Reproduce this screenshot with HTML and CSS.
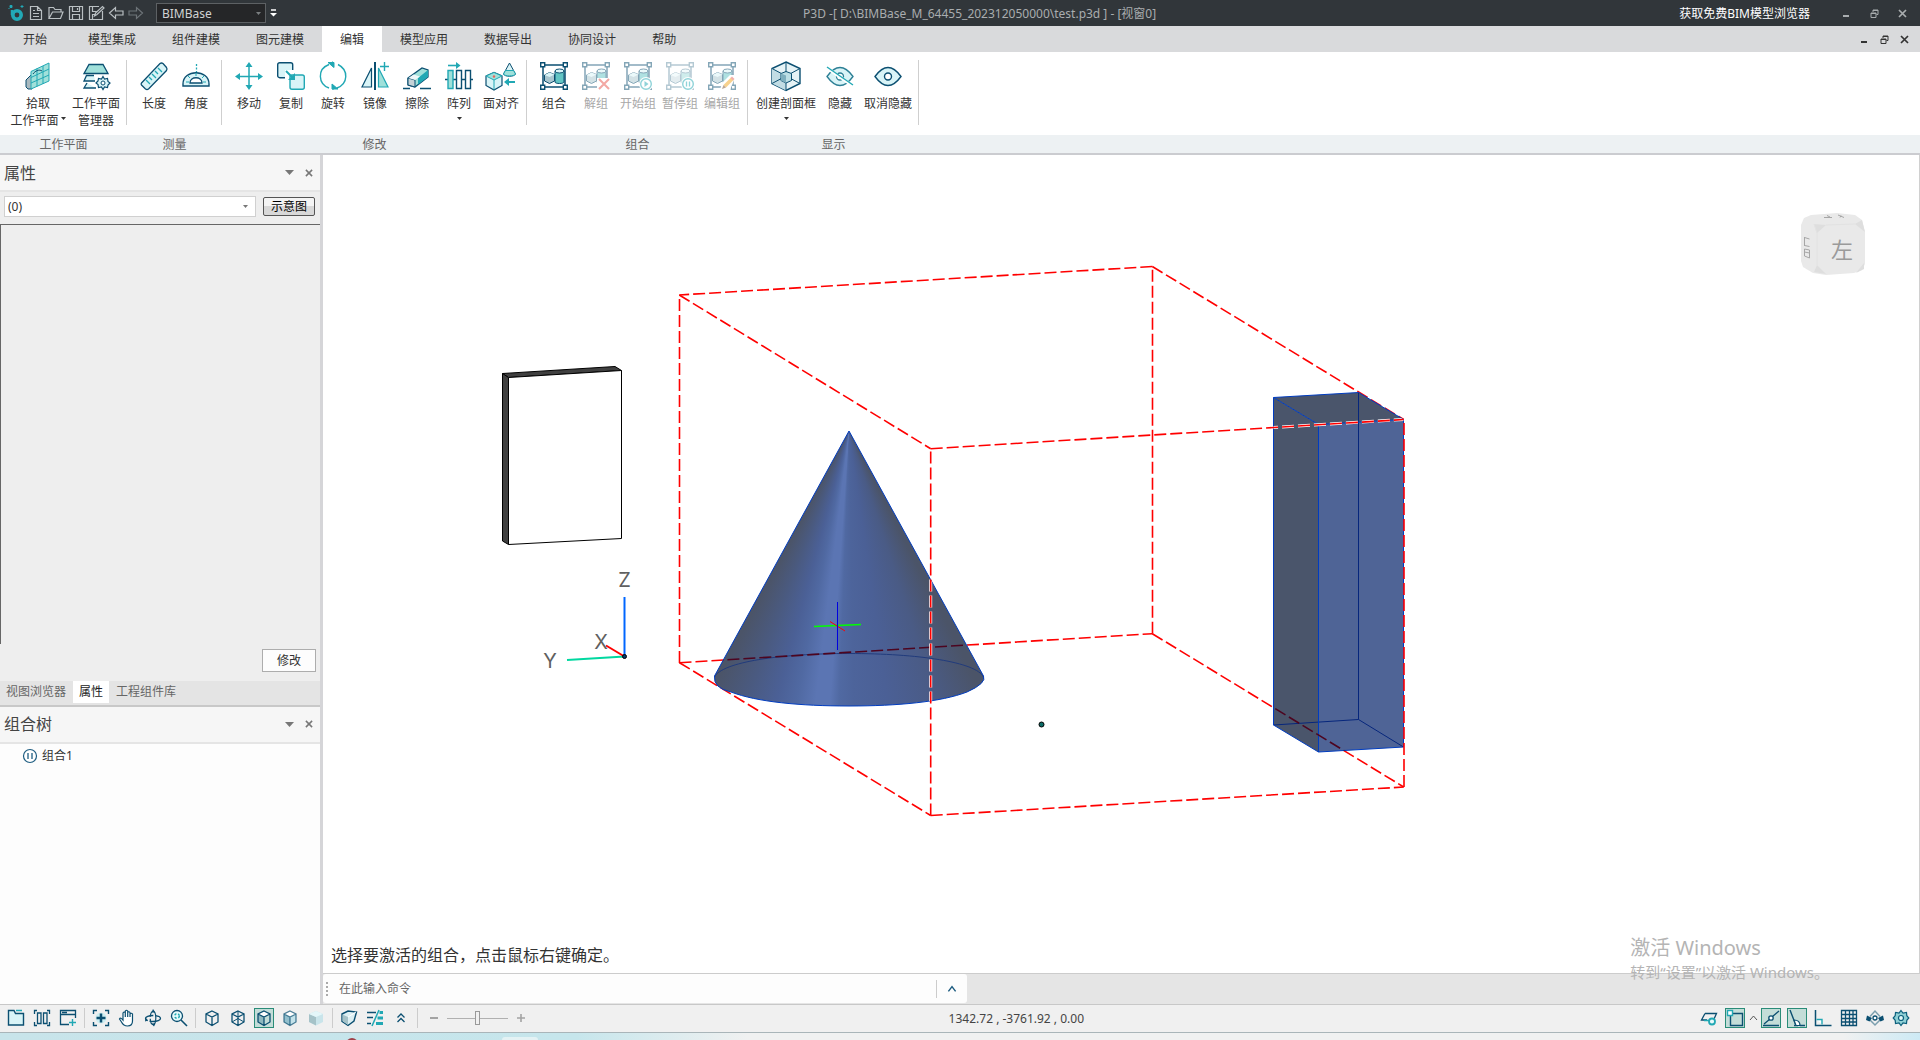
FILE: index.html
```
<!DOCTYPE html>
<html lang="zh-CN">
<head>
<meta charset="utf-8">
<title>P3D - BIMBase</title>
<link rel="stylesheet" href="styles.css">
</head>
<body>
<svg class="defs" aria-hidden="true">
  <symbol id="i-min" viewBox="0 0 9 9"><path d="M1 7h6" stroke="currentColor" stroke-width="2"/></symbol>
  <symbol id="i-restore" viewBox="0 0 9 9"><path d="M1 4h5v4.500h-5zM1 4.500h5M3 3V1h5v4.500H6.500M3 1.500h5" fill="none" stroke="currentColor"/></symbol>
  <symbol id="i-close" viewBox="0 0 9 9"><path d="M1 1l7 7M8 1l-7 7" stroke="currentColor" stroke-width="1.700"/></symbol>
  <symbol id="i-down" viewBox="0 0 9 5"><path d="M0 0h9l-4.500 5z" fill="currentColor"/></symbol>
  <symbol id="i-group" viewBox="0 0 28 28">
    <path d="M4 3h20M4 25h20M3 4v20M25 4v20" stroke="#0b4f71" stroke-width="1.500"/>
    <path d="M.7.700h4v4h-4zM23.300.700h4v4h-4zM.7 23.300h4v4h-4zM23.300 23.300h4v4h-4z" fill="#fff" stroke="#0b4f71" stroke-width="1.400"/>
    <path d="M4.500 13l5-2.500 5 2v6.500l-5 2.500-5-2.500z" fill="#a9c6cf" stroke="#0b4f71"/>
    <path d="M4.500 13l5 2 5-2.500-5-2z" fill="#d9f4f7"/>
    <path d="M15 9v11c0 2 9 2 9 0V9z" fill="#62c5c4" stroke="#0b4f71"/>
    <ellipse cx="19.500" cy="9" rx="4.500" ry="2" fill="#d9f4f7" stroke="#0b4f71"/>
  </symbol>
  <symbol id="i-cube" viewBox="0 0 18 18"><path d="M9 2l6 3v8l-6 3.500L3 13V5zM3 5l6 3 6-3M9 8v8.500" fill="none" stroke="#0b4f71" stroke-width="1.300"/></symbol>
</svg>

<div class="app">
  <header class="titlebar">
    <nav class="quick" aria-label="快速访问">
      <button aria-label="BIMBase"><svg viewBox="0 0 18 18"><circle cx="10" cy="11" r="4.200" fill="none" stroke="#22a9b6" stroke-width="3.600"/><path d="M5 11V6" stroke="#22a9b6" stroke-width="2.500"/><path d="M3 1.500h2v2H3zM1.500 4.500h1M13.500 2.500h3M15 1v3" stroke="#22a9b6" fill="#22a9b6"/></svg></button>
      <button aria-label="新建"><svg viewBox="0 0 18 18"><path d="M3.500 2.500h7l4 4v9h-11zM10.500 2.500v4h4M6 9.500h6M6 12.500h6M6 6.500h2" fill="none" stroke="#b9bfc2" stroke-width="1.200"/></svg></button>
      <button aria-label="打开"><svg viewBox="0 0 18 18"><path d="M2 14.500V3.500h4.500l1.500 2h6v2.500M2 14.500L5.500 8H16l-2.500 6.500z" fill="none" stroke="#b9bfc2" stroke-width="1.200"/></svg></button>
      <button aria-label="保存"><svg viewBox="0 0 18 18"><path d="M2.500 2.500h13v13h-13zM5.500 2.500v5h7v-5M5.500 15.500v-5h7v5M10.500 4v2" fill="none" stroke="#b9bfc2" stroke-width="1.200"/></svg></button>
      <button aria-label="另存为"><svg viewBox="0 0 18 18"><path d="M12 2.500H2.500v13h13V7M5.500 2.500v5h4M5.500 15.500v-5h3M7.500 12l1-3 7-6.500 1.500 1.500-7 6.500z" fill="none" stroke="#b9bfc2" stroke-width="1.200"/></svg></button>
      <button aria-label="撤销"><svg viewBox="0 0 18 18"><path d="M2.500 9L8.500 3.500v3.500H16v4H8.500v3.500z" fill="none" stroke="#b9bfc2" stroke-width="1.200"/></svg></button>
      <button aria-label="重做"><svg viewBox="0 0 18 18"><path d="M15.500 9L9.500 3.500v3.500H2v4h7.500v3.500z" fill="none" stroke="#6d7478" stroke-width="1.200"/></svg></button>
    </nav>
    <div class="combo combo-dark">
      <select aria-label="工作空间"><option>BIMBase</option></select>
      <svg viewBox="0 0 9 5"><use href="#i-down"/></svg>
    </div>
    <button class="quick-more" aria-label="自定义"><svg viewBox="0 0 7 8"><path d="M1 1h5" stroke="#fff" stroke-width="1.500"/><path d="M0 4h7L3.500 7.500z" fill="#fff"/></svg></button>
    <h1 class="title">P3D -[ D:\BIMBase_M_64455_202312050000\test.p3d ] - [视窗0]</h1>
    <a class="promo" href="#">获取免费BIM模型浏览器</a>
    <div class="winbtns winbtns-app">
      <button aria-label="最小化"><svg><use href="#i-min"/></svg></button>
      <button aria-label="还原"><svg><use href="#i-restore"/></svg></button>
      <button aria-label="关闭"><svg><use href="#i-close"/></svg></button>
    </div>
  </header>

  <nav class="tabs">
    <button class="tab tab-home">开始</button>
    <button class="tab">模型集成</button>
    <button class="tab">组件建模</button>
    <button class="tab">图元建模</button>
    <button class="tab is-active">编辑</button>
    <button class="tab">模型应用</button>
    <button class="tab">数据导出</button>
    <button class="tab">协同设计</button>
    <button class="tab">帮助</button>
    <div class="winbtns winbtns-view">
      <button aria-label="最小化视窗"><svg><use href="#i-min"/></svg></button>
      <button aria-label="还原视窗"><svg><use href="#i-restore"/></svg></button>
      <button aria-label="关闭视窗"><svg><use href="#i-close"/></svg></button>
    </div>
  </nav>

  <div class="ribbon">
    <section class="group">
      <div class="tools">
        <button class="tool tool-wide">
          <svg viewBox="0 0 28 28"><path d="M2 18l6-6v15H4l-2-2z" fill="#a9b9bf" stroke="#0b4f71"/><path d="M7 9.500L25 1v18L7 27z" fill="#a0e0da" stroke="#21a8b4"/><path d="M7 15.500L25 7M7 21L25 13M13 6.500v18M19 4v18" stroke="#21a8b4" fill="none"/><path d="M9 12c2-3 6-5 9-3" stroke="#0b4f71" fill="none"/></svg>
          <span>拾取<br>工作平面<svg class="caret caret-inline"><use href="#i-down"/></svg></span>
        </button>
        <button class="tool tool-mid">
          <svg viewBox="0 0 28 28"><path d="M7 2.500h14l5 9H2z" fill="#a0e0da" stroke="#0b4f71" stroke-width="1.300"/><path d="M12 13.500H4.500L2 19h11M5 21l-3 5h12" fill="#d9f4f7" stroke="#0b4f71" stroke-width="1.300"/><path d="M21 14.500l1.500 2.500 3-.5.5 3 2 1.500-2 2 -.5 2.500-3-.5L21 27.500l-1.500-2.500-3 .5-.5-3-2-1.500 2-2 .5-2.500 3 .5z" fill="#d9f4f7" stroke="#0b4f71" stroke-width="1.200"/><circle cx="21" cy="21" r="2" fill="#fff" stroke="#0b4f71"/></svg>
          <span>工作平面<br>管理器</span>
        </button>
      </div>
      <h2>工作平面</h2>
    </section>
    <section class="group">
      <div class="tools">
        <button class="tool">
          <svg viewBox="0 0 28 28"><path d="M1.500 21L20 1.500q1.500-1 3 0l3.500 4q1 1.500 0 3L8.500 27q-1.500 1-3 0l-4-4q-.8-1 0-2z" fill="#d9f4f7" stroke="#0b4f71" stroke-width="1.300"/><path d="M6 18l4 4M9 15l3 3M12 12l4 4M15 9l3 3M18 6l4 4" stroke="#21a8b4" stroke-width="1.300"/></svg>
          <span>长度</span>
        </button>
        <button class="tool">
          <svg viewBox="0 0 28 28"><path d="M1 24v-2C1 7 27 7 27 22v2z" fill="#d9f4f7" stroke="#0b4f71" stroke-width="1.400"/><path d="M8 21c0-7 12-7 12 0z" fill="#fff" stroke="#0b4f71" stroke-width="1.300"/><path d="M14.500 2v8" stroke="#21a8b4" stroke-dasharray="2 1.500" stroke-width="1.300"/><path d="M4 20h3M6 14l2 2M22 14l-2 2M21 20h3M14 11v3" stroke="#21a8b4"/></svg>
          <span>角度</span>
        </button>
      </div>
      <h2>测量</h2>
    </section>
    <section class="group">
      <div class="tools">
        <button class="tool">
          <svg viewBox="0 0 28 28"><path d="M14 3v22M3 14.500h22" stroke="#21a8b4" stroke-width="1.500"/><path d="M14 0l3.500 5h-7zM14 28l3.500-5h-7zM0 14.500l5-3.500v7zM28 14.500l-5-3.500v7z" fill="#21a8b4"/></svg>
          <span>移动</span>
        </button>
        <button class="tool">
          <svg viewBox="0 0 28 28"><rect x=".7" y=".7" width="15" height="15" rx="2" fill="#d9f4f7" stroke="#0b4f71" stroke-width="1.400"/><path d="M8 8h10v10H8z" fill="#fff"/><rect x="13" y="13" width="14.300" height="14.300" rx="2" fill="#d9f4f7" stroke="#21a8b4" stroke-width="1.400"/><path d="M9 9l7 7" stroke="#21a8b4" stroke-width="2"/><path d="M18 18v-7l-7 7z" fill="#21a8b4"/></svg>
          <span>复制</span>
        </button>
        <button class="tool">
          <svg viewBox="0 0 28 28"><path d="M10 2.500C-2 7-1 22 10 26M18 26c11-4 12-18 1-23.500" fill="none" stroke="#21a8b4" stroke-width="1.400"/><path d="M9 .5h6v5zM19 27h-6v-5zM13 0h1v5M14 28v-5" fill="#21a8b4" stroke="#21a8b4"/></svg>
          <span>旋转</span>
        </button>
        <button class="tool">
          <svg viewBox="0 0 28 28"><path d="M14 0v28" stroke="#0b4f71" stroke-width="2"/><path d="M10.500 6v19H1z" fill="#d9f4f7" stroke="#0b4f71" stroke-width="1.200"/><path d="M17.500 6v19H27z" fill="#a0e0da" stroke="#21a8b4" stroke-width="1.200"/><path d="M19 4.500h9M23.500 0v9" stroke="#21a8b4" stroke-width="1.400"/></svg>
          <span>镜像</span>
        </button>
        <button class="tool">
          <svg viewBox="0 0 28 28"><path d="M5 16L19 6l6 2v7L12 25l-7-2z" fill="#a0e0da" stroke="#0b4f71" stroke-width="1.300"/><path d="M15 16L25 8v7L15 22.500z" fill="#21a8b4"/><path d="M5 16l7 2v7l-7-2z" fill="#c5d2d7" stroke="#0b4f71"/><path d="M5.500 16l5-3.500 6.500 2-5 3.500z" fill="#eef6f8"/><path d="M0 26.500h7M17 26.500h11" stroke="#0b4f71" stroke-width="1.400"/></svg>
          <span>擦除</span>
        </button>
        <button class="tool">
          <svg viewBox="0 0 28 28"><path d="M3 3.500h9" stroke="#21a8b4" stroke-width="1.600"/><path d="M11 0l4.500 3.500L11 7z" fill="#21a8b4"/><path d="M0 17.500h3M8 17.500h4M16 17.500h4M25 17.500h3" stroke="#0b4f71" stroke-width="1.500"/><path d="M3 8.500h5v18H3z" fill="#a0e0da" stroke="#21a8b4" stroke-width="1.400"/><path d="M11.500 8.500h5v18h-5zM20.500 8.500h5v18h-5z" fill="#fff" stroke="#0b4f71" stroke-width="1.400"/></svg>
          <span>阵列</span><svg class="caret"><use href="#i-down"/></svg>
        </button>
        <button class="tool">
          <svg viewBox="0 0 28 28"><path d="M-1 14l8-3.500 8 3.500v9.500L7 28l-8-4.500z" fill="#d9f4f7" stroke="#0b4f71" stroke-width="1.200"/><path d="M-1 14l8 4 8-4-8-3.500z" fill="#a0e0da" stroke="#21a8b4"/><path d="M7 18v9.500" stroke="#21a8b4"/><circle cx="7" cy="14.500" r="1.200" fill="#e8635a"/><path d="M22.500 1L16.500 12c1 3 11 3 12 0z" fill="#d9f4f7" stroke="#0b4f71"/><path d="M18.500 8.500l-2 3.500c1 2.500 11 2.500 12 0l-2-3.500z" fill="#a0e0da" stroke="#21a8b4"/><path d="M21 20h7" stroke="#21a8b4" stroke-width="2"/><path d="M17 20l5-4v8z" fill="#21a8b4"/></svg>
          <span>面对齐</span>
        </button>
      </div>
      <h2>修改</h2>
    </section>
    <section class="group">
      <div class="tools">
        <button class="tool"><svg viewBox="0 0 28 28"><use href="#i-group"/></svg><span>组合</span></button>
        <button class="tool" disabled><svg viewBox="0 0 28 28"><use href="#i-group"/><path d="M15 16h13v12H15z" fill="#fff"/><path d="M17 17l10 10M27 17L17 27" stroke="#e8534a" stroke-width="2"/></svg><span>解组</span></button>
        <button class="tool" disabled><svg viewBox="0 0 28 28"><use href="#i-group"/><circle cx="22" cy="22" r="7" fill="#fff"/><circle cx="22" cy="22" r="5.300" fill="#fff" stroke="#21a8b4" stroke-width="1.400"/><path d="M20.500 19l4 3-4 3z" fill="#21a8b4"/></svg><span>开始组</span></button>
        <button class="tool" disabled><svg viewBox="0 0 28 28"><g opacity=".6"><use href="#i-group"/></g><circle cx="22" cy="22" r="7" fill="#fff"/><circle cx="22" cy="22" r="5.300" fill="#fff" stroke="#21a8b4" stroke-width="1.400"/><path d="M20.500 19.500v5M23.500 19.500v5" stroke="#21a8b4" stroke-width="1.300"/></svg><span>暂停组</span></button>
        <button class="tool" disabled><svg viewBox="0 0 28 28"><use href="#i-group"/><path d="M12 28l2-7 8-8h6l-6 15z" fill="#fff"/><path d="M15.500 23L23 15.500l2.500 2.500-7.500 7.500z" fill="#f2a71e"/><path d="M15.500 23l2.500 2.500-4 1.500z" fill="#7b5230"/><path d="M22.500 16l1.500-1.500 2.500 2.500-1.500 1.500z" fill="#e8635a"/></svg><span>编辑组</span></button>
      </div>
      <h2>组合</h2>
    </section>
    <section class="group">
      <div class="tools">
        <button class="tool tool-wide">
          <svg viewBox="0 0 28 28"><path d="M14 0l14 6.500v15L14 28.500 0 21.500v-15z" fill="#e6f3f6" stroke="#0b4f71" stroke-width="1.400"/><path d="M0 6.500L14 13v15.500L0 21.500z" fill="#c2dde4"/><path d="M14 0v28.500M0 6.500l28 15M28 6.500l-28 15" stroke="#0b4f71" fill="none"/><path d="M9 11.500l5-2 5.500 2v7L14 21l-5-2.500z" fill="#bcdfe5" stroke="#0b4f71"/><path d="M9 11.500l5 2v7.500l-5-2.500z" fill="#7fb0bf"/></svg>
          <span>创建剖面框</span><svg class="caret"><use href="#i-down"/></svg>
        </button>
        <button class="tool tool-narrow">
          <svg viewBox="0 0 28 28"><path d="M1 14.500Q14-3.500 27 14.500 14 32.500 1 14.500z" fill="#d9f4f7" stroke="#2c7f95" stroke-width="1.300"/><circle cx="14" cy="14.500" r="3.500" fill="#fff" stroke="#2c7f95" stroke-width="1.300"/><path d="M1 6l26 18" stroke="#fff" stroke-width="3"/><path d="M1 5l26 18" stroke="#21a8b4" stroke-width="1.400"/></svg>
          <span>隐藏</span>
        </button>
        <button class="tool tool-mid">
          <svg viewBox="0 0 28 28"><path d="M1 14.500Q14-3.500 27 14.500 14 32.500 1 14.500z" fill="#d9f4f7" stroke="#0b4f71" stroke-width="1.400"/><circle cx="14" cy="14.500" r="3.500" fill="#fff" stroke="#0b4f71" stroke-width="1.400"/></svg>
          <span>取消隐藏</span>
        </button>
      </div>
      <h2>显示</h2>
    </section>
  </div>

  <div class="work">
    <aside class="side">
      <section class="props">
        <header class="panel-head"><h2>属性</h2><button aria-label="选项"><svg><use href="#i-down"/></svg></button><button aria-label="关闭属性"><svg class="x"><use href="#i-close"/></svg></button></header>
        <div class="filter">
          <div class="combo combo-light">
            <select aria-label="选择集"><option>(0)</option></select>
            <svg viewBox="0 0 9 5"><use href="#i-down"/></svg>
          </div>
          <button class="btn-sketch">示意图</button>
        </div>
        <div class="prop-area"></div>
        <div class="prop-foot"><button class="btn-modify">修改</button></div>
        <div class="panel-tabs">
          <button>视图浏览器</button>
          <button class="is-active">属性</button>
          <button>工程组件库</button>
        </div>
      </section>
      <section class="tree">
        <header class="panel-head"><h2>组合树</h2><button aria-label="选项"><svg><use href="#i-down"/></svg></button><button aria-label="关闭组合树"><svg class="x"><use href="#i-close"/></svg></button></header>
        <ul>
          <li><svg viewBox="0 0 16 16"><circle cx="8" cy="8" r="6.500" fill="#fff" stroke="#1d5c80" stroke-width="1.200"/><path d="M6 5v6M10 5v6" stroke="#1d5c80" stroke-width="1.300"/></svg>组合1</li>
        </ul>
      </section>
    </aside>

    <main class="stage">
      <div class="viewport">
        <svg class="scene" viewBox="323 155 1596 818" role="img" aria-label="三维视图">
          <defs>
            <path id="coneShape" d="M849 431L714.500 676Q713 688 731 692C757 702 800 706 849 706S941 702 967 692Q987 683 983.500 676Z"/>
            <clipPath id="coneClip"><use href="#coneShape"/></clipPath>
            <clipPath id="boxClip"><path d="M1273.500 397.500l85-5 45 27V747l-85 5-45-27z"/></clipPath>
          </defs>

          <!-- far edges of the bounding frame -->
          <g class="frame">
            <path d="M1152.300 266.500L679.300 295"/>
            <path d="M679.300 295L930.700 448.700"/>
            <path d="M679.500 663V295"/>
            <path d="M1152.300 266.500L1403.700 419.500"/>
            <path d="M1152.500 633.700V266.500"/>
            <path d="M679.500 662.700L1152.300 633.700"/>
            <path d="M679.500 662.700L930.700 815.500"/>
            <path d="M1152.300 633.700L1403.700 787"/>
            <path d="M930.700 815.500L1403.700 787"/>
          </g>

          <!-- wall panel -->
          <g stroke="#000" stroke-linejoin="round">
            <path d="M502.500 373.500L615 366.500l6.500 4-113 7z" fill="#404040"/>
            <path d="M502.500 373.500l6 4v167l-6-3.500z" fill="#404040"/>
            <path d="M508.500 377.500l113-7v168l-113 6z" fill="#fff"/>
          </g>

          <!-- cone -->
          <foreignObject x="700" y="431" width="300" height="280" clip-path="url(#coneClip)"><div class="cone"></div></foreignObject>
          <path d="M714.500 677C722 662 780 653.500 849 653.500S976 662 983.500 677" fill="none" stroke="#213b7c"/>
          <use href="#coneShape" fill="none" stroke="#003cc0"/>

          <!-- column -->
          <path d="M1273.500 397.500l85-5 45 27-85 5z" fill="#4a556b"/>
          <path d="M1273.500 397.500l45 27V752l-45-27z" fill="#4a556b"/>
          <path d="M1318.500 424.500l85-5V747l-85 5z" fill="#4f6496"/>
          <path d="M1358.500 392.500v327l45 27.500M1358.500 719.500l-85 5.500" fill="none" stroke="#06267c"/>
          <path d="M1273.500 397.500l85-5 45 27V747l-85 5-45-27zl45 27 85-5M1318.500 424.500V752" fill="none" stroke="#003cc0"/>

          <!-- frame edges seen through the solids -->
          <g class="frame frame-hidden">
            <path clip-path="url(#coneClip)" d="M679.500 662.700L1152.300 633.700"/>
            <path clip-path="url(#boxClip)" d="M1152.300 633.700L1403.700 787"/>
          </g>
          <g class="frame frame-halo">
            <path clip-path="url(#coneClip)" d="M930.700 815.500V448.700"/>
            <path clip-path="url(#boxClip)" d="M930.700 448.700L1403.700 419.500"/>
          </g>
          <g class="frame">
            <path d="M930.700 815.500V448.700"/>
            <path d="M930.700 448.700L1403.700 419.500"/>
            <path d="M1404 787V419.500"/>
          </g>

          <!-- work-plane cursor -->
          <path d="M814 626.500l47-2" stroke="#00ff00" stroke-width="1.500"/>
          <path d="M830 621.500l15 9.500" stroke="#ff0000"/>
          <path d="M837.500 602v48" stroke="#0000e0"/>
          <circle cx="1041.500" cy="724.500" r="2.500" fill="#0b6b66" stroke="#000"/>

          <!-- axis triad -->
          <path d="M624.500 656.500V597" stroke="#0066ff" stroke-width="2"/>
          <path d="M624.500 656.500l-57.500 3.500" stroke="#00d8a0" stroke-width="2"/>
          <path d="M624.500 656.500L606 645.500" stroke="#ff0000" stroke-width="2"/>
          <circle cx="624.500" cy="656.500" r="2" fill="#06386b" stroke="#000"/>
          <g class="axis-label">
            <text x="624.500" y="587">Z</text>
            <text x="601" y="649">X</text>
            <text x="550" y="668">Y</text>
          </g>

          <!-- view cube -->
          <path d="M1804 218l7-3 26-2 18 2 7 5 3 12v32l-3 6-8 3-28 2-13-2-10-6-2-6v-36z" fill="#e9e9e9"/>
          <path d="M1814 224l12 1-9 8zM1855 224l7-4 3 12zM1817 265l9 9-12-2zM1856 273l8-10v6z" fill="#dedede"/>
          <path d="M1814 224l3 9v32M1826 225l29-1" fill="none" stroke="#e2e2e2"/>
          <text class="cube-face" x="1842" y="258">左</text>
          <path d="M1804.500 237v9M1804.500 237.500l5 1.500M1804.500 245.500l5 1M1804.500 249l5 1v3l-5-1M1804.500 249v7l5 2v-5M1824 217.500h8M1827 215.500l3 1.500M1838 215l6 2.500M1840 217.500l1-2" fill="none" stroke="#a6a6a6"/>
        </svg>
        <p class="prompt">选择要激活的组合，点击鼠标右键确定。</p>
      </div>
      <div class="command">
        <div class="command-box">
          <svg class="grip" viewBox="0 0 2 14"><path d="M1 0v14" stroke="#aaa" stroke-width="2" stroke-dasharray="2 2"/></svg>
          <input type="text" aria-label="命令" placeholder="在此输入命令">
          <button aria-label="展开"><svg viewBox="0 0 10 10"><path d="M2 7l3-4 3 4" fill="none" stroke="#1d5c80" stroke-width="1.200"/></svg></button>
        </div>
      </div>
      <div class="watermark"><strong>激活 Windows</strong><span>转到“设置”以激活 Windows。</span></div>
    </main>
  </div>

  <footer class="status">
    <div class="sgroup">
      <button aria-label="视图"><svg viewBox="0 0 18 18"><path d="M1.500 16V1.500H7l1.500 3h8V16z" fill="#d9f4f7" stroke="#0b4f71" stroke-width="1.400"/><path d="M9 1.500h6" stroke="#21a8b4" stroke-width="1.500"/></svg></button>
      <button aria-label="平铺"><svg viewBox="0 0 18 18"><path d="M4 1.500H1.500V5M14 1.500h2.500V5M4 16.500H1.500V13M14 16.500h2.500V13M4.500 4h3.500v10.500H4.500zM10.500 4h3.500v10.500h-3.500z" fill="none" stroke="#0b4f71" stroke-width="1.300"/></svg></button>
      <button aria-label="新视窗"><svg viewBox="0 0 18 18"><path d="M10 15.500H1.500V1.500h15V9M1.500 5.500h15M3 3.500h5" fill="none" stroke="#0b4f71" stroke-width="1.300"/><path d="M10 13.500h7M13.500 10v7" stroke="#21a8b4" stroke-width="1.400"/></svg></button>
    </div>
    <div class="sgroup">
      <button aria-label="全图"><svg viewBox="0 0 18 18"><circle cx="9" cy="9" r="5.500" fill="#cdeef2"/><path d="M5 1.500H1.500V5M13 1.500h3.500V5M5 16.500H1.500V13M13 16.500h3.500V13" fill="none" stroke="#0b4f71" stroke-width="1.400"/><path d="M9 4.500v9M4.500 9h9" stroke="#0b4f71" stroke-width="2.500"/></svg></button>
      <button aria-label="平移"><svg viewBox="0 0 18 18"><path d="M5 11V4q1.200-2 2.300 0V2q1.200-1.500 2.400 0v1.500q1.200-1.500 2.300 0V5q1.500-1.500 2.500 0v7q0 5-5 5-4 0-6-4l-2-3q1-2 3.500 1zM7.300 4v4M9.700 3v5M12 4v4" fill="#fff" stroke="#0b4f71" stroke-width="1.200"/></svg></button>
      <button aria-label="旋转视图"><svg viewBox="0 0 18 18"><ellipse cx="9" cy="9.500" rx="7.500" ry="3" fill="none" stroke="#0b4f71" stroke-width="1.300" stroke-dasharray="12 2"/><ellipse cx="9" cy="9" rx="2.800" ry="6.500" fill="none" stroke="#0b4f71" stroke-width="1.200" stroke-dasharray="14 2"/><path d="M9 0l2.500 3.500h-4zM10 17.500l-3-3h4.500zM1 12.500l.5-4 2.500 3z" fill="#0b4f71"/></svg></button>
      <button aria-label="缩放"><svg viewBox="0 0 18 18"><circle cx="7" cy="7" r="5.500" fill="#e6fafb" stroke="#0b4f71" stroke-width="1.300"/><circle cx="7" cy="7" r="2.300" fill="none" stroke="#21a8b4" stroke-width="1.500" stroke-dasharray="2 1.600"/><path d="M11 11l6 6" stroke="#0b4f71" stroke-width="1.600"/></svg></button>
    </div>
    <div class="sgroup">
      <button aria-label="线框"><svg><use href="#i-cube"/></svg></button>
      <button aria-label="隐藏线"><svg viewBox="0 0 18 18"><use href="#i-cube"/><path d="M9 2v6M3 13l6-3.500L15 13" fill="none" stroke="#0b4f71" stroke-width="1"/></svg></button>
      <button class="is-on" aria-label="着色"><svg viewBox="0 0 18 18"><path d="M9 2l6 3-6 3-6-3z" fill="#fff"/><path d="M3 5l6 3v8.500L3 13z" fill="#8fb9bf"/><use href="#i-cube"/></svg></button>
      <button aria-label="带边着色"><svg viewBox="0 0 18 18"><path d="M9 2l6 3v8l-6 3.500L3 13V5z" fill="#c4e2ea"/><path d="M3 5l6 3v8.500L3 13z" fill="#92bfcd"/><path d="M9 2l6 3-6 3-6-3z" fill="#fff"/><g opacity=".7"><use href="#i-cube"/></g></svg></button>
      <button aria-label="真实"><svg viewBox="0 0 18 18"><path d="M9 2l7 3v8l-7 3.500L2 13V5z" fill="#c9e4ea"/><path d="M2 5l7 3v8.500L2 13z" fill="#a5c2c8"/><path d="M9 2l7 3-7 3-7-3z" fill="#e4f6f9"/></svg></button>
    </div>
    <div class="sgroup">
      <button aria-label="剖切"><svg viewBox="0 0 18 18"><path d="M2 5l6-3 8.500 1-2.500 9-6 4.500-6-4z" fill="#dceff3" stroke="#0b4f71" stroke-width="1.400"/><path d="M2.500 5.500L8 8v8l-5.500-4z" fill="#a5c2c8"/><path d="M8 8l8-5" stroke="#fff"/></svg></button>
      <button aria-label="线型"><svg viewBox="0 0 18 18"><path d="M1 3.500h9M1 8.500h6M1 14.500h4" stroke="#0b4f71" stroke-width="1.500"/><path d="M13 1L6 17" stroke="#21a8b4" stroke-width="1.500"/><path d="M13.500 3.500H17M11.500 9H17M10 14.500h7" stroke="#21a8b4" stroke-width="3"/></svg></button>
      <button aria-label="更多"><svg viewBox="0 0 18 18"><path d="M5.500 8.500L9 5l3.500 3.500M5.500 13L9 9.500l3.500 3.500" fill="none" stroke="#0b4f71" stroke-width="1.300"/></svg></button>
    </div>
    <div class="zoom">
      <button aria-label="缩小"><svg viewBox="0 0 10 10"><path d="M1 5h8" stroke="#a3a3a3" stroke-width="2"/></svg></button>
      <input type="range" aria-label="缩放比例" min="0" max="100" value="50">
      <button aria-label="放大"><svg viewBox="0 0 10 10"><path d="M1 5h8M5 1v8" stroke="#a3a3a3" stroke-width="1.600"/></svg></button>
    </div>
    <output class="coords">1342.72 , -3761.92 , 0.00</output>
    <div class="sgroup sgroup-end">
      <button aria-label="工作面显示"><svg viewBox="0 0 18 18"><path d="M5 4.500h11.500L14 10M5 4.500L1.500 11H7" fill="none" stroke="#0b4f71" stroke-width="1.300"/><path d="M4 11.500h5" stroke="#21a8b4" stroke-width="1.500"/><circle cx="12" cy="12.500" r="3" fill="#e6fafb" stroke="#21a8b4" stroke-width="1.800"/></svg></button>
      <button class="is-on" aria-label="捕捉"><svg viewBox="0 0 18 18"><path d="M4.500 7v9.500h12V4.500H7" fill="none" stroke="#0b4f71" stroke-width="1.400"/><path d="M1.500 1.500h5v5h-5z" fill="#fff" stroke="#21a8b4" stroke-width="1.400"/></svg></button>
      <button class="narrow" aria-label="捕捉选项"><svg viewBox="0 0 10 18"><path d="M2 11l3.500-4L9 11" fill="none" stroke="#555"/></svg></button>
      <button class="is-on" aria-label="对象追踪"><svg viewBox="0 0 18 18"><path d="M1 16.500h16M2 15l6-5M10.500 7.500L17 2" fill="none" stroke="#0b4f71" stroke-width="1.300"/><circle cx="9" cy="9" r="2.200" fill="#fff" stroke="#0b4f71" stroke-width="1.300"/></svg></button>
      <button class="is-on" aria-label="极轴"><svg viewBox="0 0 18 18"><path d="M2 1l6 15.500M6 16.500h4M12 16.500h5" stroke="#0b4f71" stroke-width="1.400" fill="none"/><path d="M6 11q6 0 6 5.500H8z" fill="#fff" stroke="#0b4f71" stroke-width="1.200"/></svg></button>
      <button aria-label="正交"><svg viewBox="0 0 18 18"><path d="M1.500 1v15.500h16" fill="none" stroke="#0b4f71" stroke-width="1.500"/><path d="M2.500 10.500h5.500v5" fill="#fff" stroke="#21a8b4" stroke-width="1.400"/></svg></button>
      <button aria-label="网格"><svg viewBox="0 0 18 18"><path d="M1.500 1.500h15v15h-15zM1.500 5.500h15M1.500 9.500h15M1.500 13h15M5.500 1.500v15M9.500 1.500v15M13 1.500v15" fill="none" stroke="#0b4f71" stroke-width="1.300"/></svg></button>
      <button aria-label="定位"><svg viewBox="0 0 18 18"><path d="M4 7.500l5-5.500 5 5.500M4 11l5 5 5-5" fill="none" stroke="#7b9fae" stroke-width="1.500"/><path d="M0 11l1-4.500L6 9l-2.500 3.500zM18 11l-1-4.500L12 9l2.500 3.500z" fill="#0b4f71"/><circle cx="9" cy="9" r="2" fill="#fff" stroke="#0b4f71" stroke-width="1.300"/></svg></button>
      <button aria-label="设置"><svg viewBox="0 0 18 18"><path d="M9 1.500l2 2.500 3.500-.5.300 3.200 2 2.300-2 2.300-.3 3.200-3.500-.5-2 2.500-2-2.500-3.500.5-.3-3.200-2-2.300 2-2.300.3-3.200.3-.2L7 4z" fill="#8fd0d5" stroke="#0b5f7c" stroke-width="1.200"/><circle cx="9" cy="9" r="2.500" fill="#e6fafb" stroke="#0b5f7c" stroke-width="1.200"/></svg></button>
    </div>
  </footer>
  <div class="taskbar"><i class="task-dot"></i><i class="task-active"></i></div>
</div>
</body>
</html>
```
FILE: styles.css
```
* { box-sizing: border-box; }
html, body { height: 100%; margin: 0; }
body {
  font: 12px/17px "Noto Sans", "Noto Sans CJK SC", sans-serif;
  color: #333;
  overflow: hidden;
}
h1, h2, p, ul { margin: 0; padding: 0; font-size: 12px; font-weight: 400; list-style: none; }
button {
  display: flex; align-items: center; justify-content: center;
  margin: 0; padding: 0; border: 0; background: none;
  font: inherit; color: inherit; flex: none;
}
select, input { font: inherit; color: inherit; margin: 0; }
svg { display: block; flex: none; }
.defs { position: absolute; width: 0; height: 0; }

.app { display: flex; flex-direction: column; height: 100vh; background: #fff; }

/* title bar */
.titlebar { display: flex; align-items: center; height: 26px; background: #31363a; color: #a9adaf; }
.quick { display: flex; padding-left: 6px; }
.quick button { width: 20px; height: 26px; }
.quick svg { width: 18px; height: 18px; }
.combo { position: relative; display: flex; align-items: center; }
.combo select { width: 100%; height: 100%; appearance: none; border: 1px solid; border-radius: 0; outline: 0; }
.combo svg { position: absolute; right: 8px; width: 5px; height: 3px; pointer-events: none; }
.combo-dark { width: 110px; height: 20px; margin-left: 10px; }
.combo-dark select { background: #252628; border-color: #5d6164; color: #d0d2d3; padding: 0 5px; }
.combo-dark svg { right: 5px; color: #7a7e80; }
.quick-more { width: 14px; height: 26px; }
.quick-more svg { width: 7px; height: 8px; }
.title { flex: 1; text-align: center; white-space: nowrap; }
.promo { color: #fff; text-decoration: none; margin-right: 22px; }
.winbtns { display: flex; }
.winbtns svg { width: 9px; height: 9px; }
.winbtns-app { padding-right: 4px; }
.winbtns-app button { width: 28px; height: 26px; }
.winbtns-view { margin-left: auto; padding-right: 6px; }
.winbtns-view button { width: 20px; height: 26px; }

/* menu tabs */
.tabs { display: flex; height: 26px; background: #d9dadc; }
.tab { padding: 0 18px; }
.tab-home { padding: 0 23px; }
.tab.is-active { background: #fff; }

/* ribbon */
.ribbon {
  display: flex; height: 103px;
  background: linear-gradient(#fff 83px, #edf1f3 83px);
  border-bottom: 2px solid #cbccd0;
}
.group { display: flex; flex-direction: column; }
.tools { position: relative; display: flex; height: 83px; padding: 10px 5px 0 6px; }
.tools::after { content: ""; position: absolute; right: 0; top: 8px; width: 1px; height: 65px; background: #cfcfcf; }
.tool { width: 42px; flex-direction: column; justify-content: flex-start; white-space: nowrap; }
.tool > svg { width: 28px; height: 28px; margin-bottom: 5px; overflow: visible; }
.tool-wide { width: 64px; }
.tool-mid { width: 52px; }
.tool-narrow { width: 44px; }
.tool:disabled { color: #a8a8a8; }
.tool:disabled > svg { opacity: .5; }
.tool > .caret { width: 5px; height: 3px; margin: 5px 0 0; }
.caret-inline { display: inline-block; width: 5px; height: 3px; margin: 0 0 5px 2px; }
.group h2 { height: 18px; line-height: 20px; text-align: center; color: #666; }

/* work area */
.work { display: flex; flex: 1; min-height: 0; }
.side { display: flex; flex-direction: column; width: 323px; border-right: 3px solid #d5d5d8; background: #fdfdfd; }
.props { display: flex; flex-direction: column; flex: 551 1 0; background: #eee; border-bottom: 2px solid #c8c8c8; }
.tree { flex: 298 1 0; }
.panel-head { display: flex; align-items: center; height: 37px; padding: 0 2px 0 4px; background: #f6f6f6; border-bottom: 2px solid #e5e5e5; color: #777; }
.panel-head h2 { flex: 1; font-size: 16px; line-height: 24px; color: #444; }
.panel-head button { width: 19px; height: 20px; }
.panel-head svg { width: 9px; height: 5px; }
.panel-head svg.x { width: 8px; height: 8px; }
.filter { display: flex; align-items: center; gap: 7px; height: 32px; padding: 0 5px 3px 4px; }
.combo-light { flex: 1; height: 21px; }
.combo-light select { background: #fff; border-color: #d0d0d0; padding: 0 3px; }
.combo-light svg { color: #777; }
.btn-sketch { width: 52px; height: 19px; border: 1px solid #555; border-radius: 2px; color: #000; background: linear-gradient(#f4f4f4 45%, #d8d8d8 45%); }
.prop-area { flex: 1; border: solid #666; border-width: 1px 0 0 1px; }
.prop-foot { display: flex; justify-content: flex-end; padding: 5px 4px 9px; }
.btn-modify { width: 54px; height: 23px; border: 1px solid #adadad; background: #fdfdfd; }
.panel-tabs { display: flex; gap: 1px; height: 24px; padding-bottom: 2px; background: #e4e4e4; color: #666; }
.panel-tabs button { padding: 0 6px; }
.panel-tabs .is-active { background: #fff; color: #222; }
.tree li { display: flex; align-items: center; gap: 4px; height: 24px; padding-left: 22px; }
.tree li svg { width: 16px; height: 16px; }

.stage { position: relative; display: flex; flex-direction: column; flex: 1; min-width: 0; }
.viewport { position: relative; flex: 1; min-height: 0; border-right: 1px solid #d0d0d0; border-bottom: 1px solid #ccc; }
.scene { width: 100%; height: 100%; }
.frame { fill: none; stroke: #f00; stroke-width: 1.6; stroke-dasharray: 12 4; }
.frame-hidden { stroke: #4d0520; }
.frame-halo { stroke: #fff; stroke-width: 3; }
.cone {
  width: 300px; height: 280px;
  background: conic-gradient(from 150deg at 149px 0px,
    #4b5468 0deg, #4b5468 3deg, #4a5b85 12deg, #4b6096 22deg, #4d649b 29deg,
    #5069a2 32deg, #5b75b3 34deg, #5b75b3 37deg, #5069a2 41deg, #4b6096 45deg, #4a5a80 51deg, #4b5468 58deg, #4b5468 60deg);
}
.axis-label { font: 20px Inter, sans-serif; fill: #606060; text-anchor: middle; }
.cube-face { font: 22px "Noto Sans CJK SC", sans-serif; fill: #9a9a9a; text-anchor: middle; }
.prompt { position: absolute; left: 8px; bottom: 6px; font-size: 16px; line-height: 24px; }

.command { display: flex; height: 30px; background: #e5e5e5; }
.command-box { display: flex; align-items: center; width: 644px; margin: 0 0 1px; padding-left: 3px; background: #fdfdfd; border-radius: 3px; }
.grip { width: 2px; height: 14px; }
.command-box input { flex: 1; height: 20px; border: 0; outline: 0; padding: 0 11px; background: none; }
.command-box input::placeholder { color: #666; opacity: 1; }
.command-box button { width: 31px; height: 18px; border-left: 1px solid #ccc; }
.command-box button svg { width: 12px; height: 12px; }
.watermark { position: absolute; right: 91px; bottom: 22px; display: flex; flex-direction: column; color: #b4b4b4; pointer-events: none; }
.watermark strong { font-size: 20px; line-height: 28px; font-weight: 400; }
.watermark span { font-size: 15px; line-height: 20px; }

/* status bar */
.status { display: flex; align-items: center; height: 29px; padding-bottom: 1px; background: #f0f0f0; border-top: 1px solid #c8c8c8; border-bottom: 1px solid #a9b5b9; }
.sgroup { display: flex; align-items: center; padding: 0 3px; border-right: 1px solid #ccc; }
.sgroup button { width: 26px; height: 20px; }
.sgroup svg { width: 18px; height: 18px; }
.sgroup .is-on { width: 20px; margin: 0 3px; background: #c3ddd8; border: 1px solid #2a8c78; }
.sgroup .narrow { width: 10px; }
.sgroup .narrow svg { width: 10px; }
.sgroup-end { border: 0; padding-right: 6px; }
.zoom { display: flex; align-items: center; padding-left: 10px; }
.zoom button { width: 12px; height: 20px; }
.zoom svg { width: 10px; height: 10px; }
.zoom input { width: 61px; height: 16px; margin: 0 7px; appearance: none; background: linear-gradient(#b0b0b0, #b0b0b0) center / 100% 1px no-repeat; }
.zoom input::-webkit-slider-thumb { appearance: none; width: 5px; height: 14px; background: #f0f0f0; border: 1px solid #999; }
.coords { flex: 1; display: flex; color: #444; white-space: nowrap; }
.coords::before { content: ""; flex: 9; }
.coords::after { content: ""; flex: 13; }

.taskbar { position: relative; height: 7px; overflow: hidden; background: linear-gradient(90deg, #c8e4ea 0, #c6e6ec 30%, #f0f1f1 39%, #f0f1f1 96%, #cdeaf5 100%); }
.task-dot { position: absolute; left: 346px; top: 5px; width: 12px; height: 12px; border-radius: 6px; background: #a04048; }
.task-active { position: absolute; left: 502px; top: 4px; width: 36px; height: 10px; border-radius: 3px; background: #e4f2f4; }
```
